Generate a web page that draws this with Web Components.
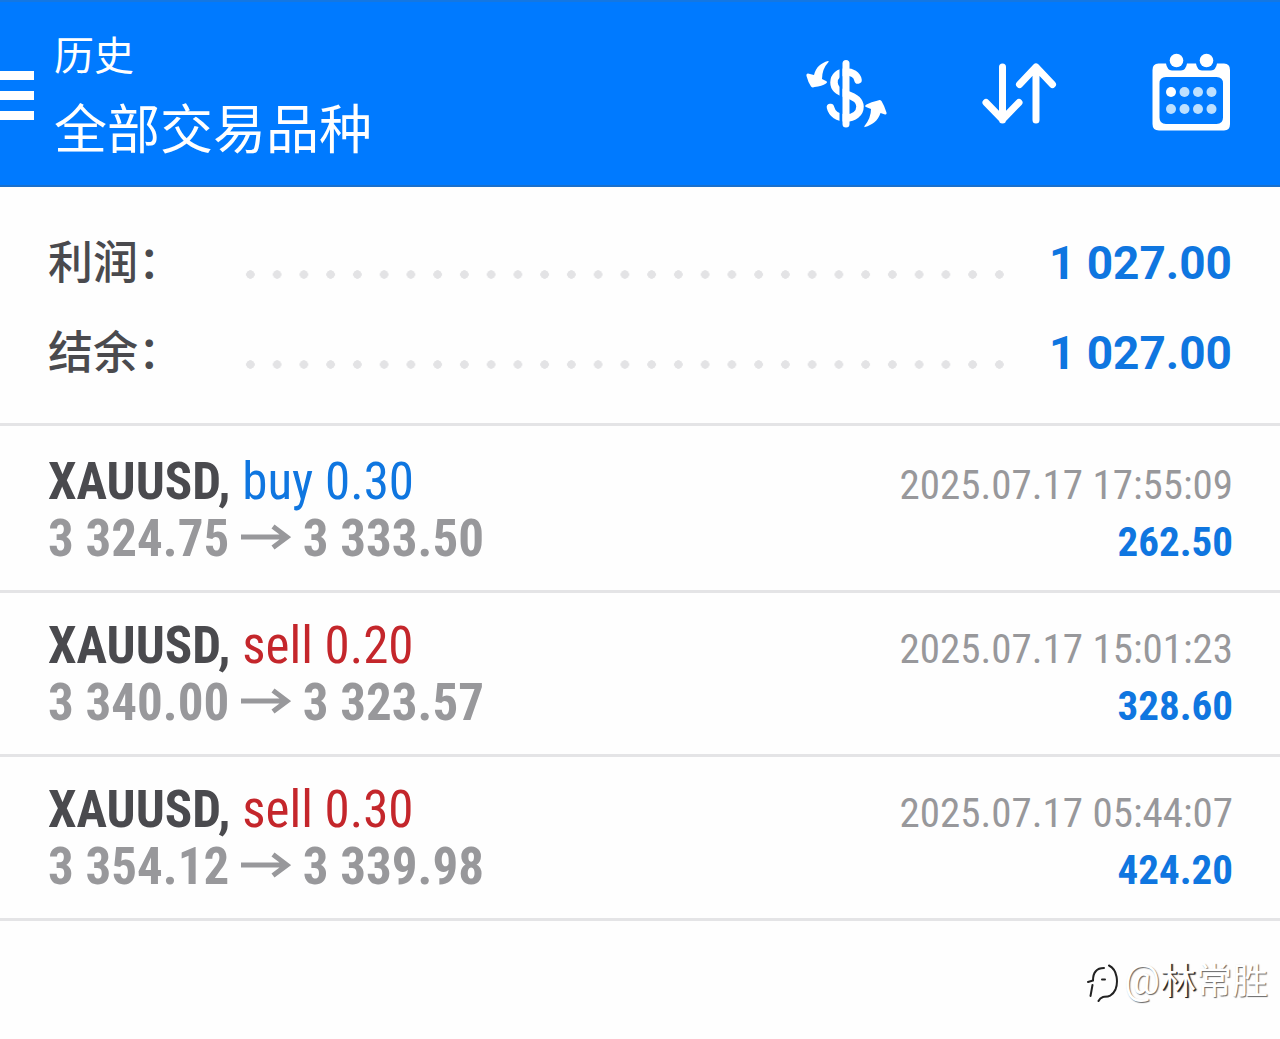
<!DOCTYPE html>
<html lang="zh-CN">
<head>
<meta charset="utf-8">
<meta name="viewport" content="width=device-width, initial-scale=1">
<title>历史</title>
<style>
  :root {
    --bar: #007aff;
    --blue: #0f76e0;
    --red: #c4262b;
    --ink: #4a4a4e;
    --grey: #98989b;
    --line: #e4e4e6;
    --edge: 48px;
    --cjk: "Noto Sans CJK SC", sans-serif;
    --narrow: "Roboto Condensed", Roboto, "Noto Sans CJK SC", sans-serif;
  }
  body { margin: 0; background: #fefefe; color: var(--ink); font-family: Roboto, var(--cjk); }
</style>
</head>
<body>
<history-page></history-page>

<template id="page-tpl">
  <style>
    :host { display: flex; flex-direction: column; min-height: 100vh; }
    main { flex: 1; }
    .summary { padding: 31px var(--edge) 25px; border-bottom: 3px solid var(--line); }
    .deals { padding-top: 3px; }
    footer { display: flex; justify-content: flex-end; padding: 0 12px 31px; }
  </style>
  <app-bar>
    <span slot="title">历史</span>
    <span slot="subtitle">全部交易品种</span>
  </app-bar>
  <main>
    <section class="summary">
      <summary-line><span slot="label">利润：</span><span slot="value">1 027.00</span></summary-line>
      <summary-line><span slot="label">结余：</span><span slot="value">1 027.00</span></summary-line>
    </section>
    <section class="deals" role="list">
      <deal-row role="listitem" side="buy" volume="0.30" open="3 324.75" close="3 333.50" time="2025.07.17 17:55:09" profit="262.50"></deal-row>
      <deal-row role="listitem" side="sell" volume="0.20" open="3 340.00" close="3 323.57" time="2025.07.17 15:01:23" profit="328.60"></deal-row>
      <deal-row role="listitem" side="sell" volume="0.30" open="3 354.12" close="3 339.98" time="2025.07.17 05:44:07" profit="424.20"></deal-row>
    </section>
  </main>
  <footer><author-mark></author-mark></footer>
</template>

<template id="bar-tpl">
  <style>
    :host { display: block; }
    header {
      display: flex; align-items: center; box-sizing: border-box; height: 187px;
      padding-right: 40px; background: var(--bar); color: #fff;
      border-top: 2px solid #1477e2; border-bottom: 2px solid #1a70cc;
    }
    button { display: flex; align-items: center; justify-content: center; padding: 0; border: 0; background: none; color: inherit; }
    svg { display: block; fill: currentColor; }
    .titles { flex: 1; padding-left: 20px; font-family: var(--cjk); }
    h1, p { margin: 0; font-weight: 400; }
    h1 { font-size: 40px; line-height: 48px; }
    p { font-size: 53px; line-height: 64px; margin-top: 17px; }
    nav { display: flex; gap: 72px; }
    nav button { width: 100px; height: 100px; }
  </style>
  <header>
    <button aria-label="菜单">
      <svg width="34" height="54" viewBox="0 0 34 54"><path d="M0 4h34v9H0zM0 24h34v9H0zM0 44h34v9H0z"/></svg>
    </button>
    <div class="titles"><h1><slot name="title"></slot></h1><p><slot name="subtitle"></slot></p></div>
    <nav>
      <button aria-label="货币">
        <svg width="100" height="100" viewBox="0 0 100 100">
          <path fill="none" stroke="currentColor" stroke-width="7.500" stroke-linecap="round" d="M62 36C61 30.500 56 28 50 28C43 28 38 32 38 38.500C38 45 43 48 50 50C58 52.500 64 56 64 62.500C64 69.500 58 74 50 74C42 74 36 70 34.500 63.500"/>
          <path fill="#007aff" d="M43.500 20h3v64h-3z"/>
          <path fill="none" stroke="currentColor" stroke-width="7" stroke-linecap="round" d="M50 19.500v60.500"/>
          <path d="M32 17C25 19 20 23 18 31L12 29.500Q10 29.500 10.500 32Q12 38 15 42.500Q16.500 44 18.500 43Q26 42 30 39.500Q32 38 30 37L26 35Q26 25 32.500 18Q33 16.500 32 17Z"/>
          <path d="M69 83C76 81 82 77 84.500 69L89 70.500Q91 71 90.500 68.500Q88 61 85.500 57Q84 55.500 82 56.500Q75 58 70.500 60.500Q68 62 70 63L75 65Q75 74 68.500 82Q68 83.500 69 83Z"/>
        </svg>
      </button>
      <button aria-label="排序">
        <svg width="100" height="100" viewBox="0 0 100 100">
          <path fill="none" stroke="currentColor" stroke-width="7" stroke-linecap="round" stroke-linejoin="round" d="M34.500 23v53M18 58.500L34.500 75.500L51 58.500M68 76v-53M51.500 40.500L68 23L84.500 40.500"/>
        </svg>
      </button>
      <button aria-label="日期">
        <svg width="100" height="100" viewBox="0 0 100 100">
          <path fill-rule="evenodd" d="M18.500 19.500h7.500Q27 26 32 26.500H41Q46 26 47 19.500H56Q57 26 62 26.500H71Q76 26 77 19.500H84Q90 19.500 90 26V80Q90 86.500 84 86.500H19Q12.500 86.500 12.500 80V26Q12.500 19.500 18.500 19.500ZM26 33Q19.500 33 19.500 39.500V73.500Q19.500 80 26 80H76.500Q83 80 83 73.500V39.500Q83 33 76.500 33Z"/>
          <circle cx="36.500" cy="16.500" r="6.800"/><circle cx="66.500" cy="16.500" r="6.800"/>
          <circle cx="31" cy="48" r="5"/>
          <g fill="#bde0ff"><circle cx="44.500" cy="48" r="5"/><circle cx="58" cy="48" r="5"/><circle cx="71.500" cy="48" r="5"/>
          <circle cx="31" cy="65" r="5"/><circle cx="44.500" cy="65" r="5"/><circle cx="58" cy="65" r="5"/><circle cx="71.500" cy="65" r="5"/></g>
        </svg>
      </button>
    </nav>
  </header>
</template>

<template id="summary-tpl">
  <style>
    :host { display: flex; align-items: baseline; box-sizing: border-box; height: 90px; padding-top: 12px; }
    .label { width: 189px; font: 500 45px/60px var(--cjk); color: var(--ink); }
    .dots { flex: 1; height: 9px; margin: 0 36px 5px 0;
      background: radial-gradient(circle closest-side, #e3e3e5 88%, transparent) 0 0 / 27px 9px round; }
    .value { font: 700 46px/60px Roboto, sans-serif; color: var(--blue); }
  </style>
  <span class="label"><slot name="label"></slot></span>
  <span class="dots" aria-hidden="true"></span>
  <span class="value"><slot name="value"></slot></span>
</template>

<template id="deal-tpl">
  <style>
    :host { display: block; padding: 24px 47px 23px var(--edge);
      border-bottom: 3px solid var(--line); font-family: var(--narrow); }
    div { display: flex; justify-content: space-between; align-items: baseline; height: 57px;
      font-size: 51px; line-height: 57px; white-space: pre; }
    b { font-weight: 700; }
    .buy, .profit { color: var(--blue); }
    .sell { color: var(--red); }
    .prices, time { color: var(--grey); }
    time, .profit { font-size: 41px; }
    .arrow { vertical-align: 6px; }
  </style>
  <div>
    <span><b>XAUUSD,</b> <span class="order"></span></span>
    <time></time>
  </div>
  <div>
    <b class="prices"><span class="open"></span> <svg class="arrow" role="img" aria-label="→" width="50" height="26" viewBox="0 0 50 26" fill="none" stroke="currentColor" stroke-width="5"><path d="M0 13H46M32 2.500L46 13L32 23.500"/></svg> <span class="close"></span></b>
    <b class="profit"></b>
  </div>
</template>

<template id="mark-tpl">
  <style>
    :host { display: flex; align-items: center; gap: 5px; font: 400 36px/52px Roboto, var(--cjk); color: #fff; }
    svg { display: block; }
    span { text-shadow: 1px 1px 1px #666; }
    .at { font-size: 40px; line-height: 1px; }
    .dark { text-shadow: 1px 1px 0 #222, 2px 1px 1px #444; }
  </style>
  <svg width="32" height="44" viewBox="0 0 32 44" fill="none" stroke-linecap="round" aria-hidden="true">
    <path stroke="#222" stroke-width="2" d="M1 22L6 20.500Q6 8 17 8M5.500 25L3.500 36M22 5.500C31 10 31 23 28.500 29.500C25 37 20 36.500 16 37Q13 38 11.500 41M15 19.500H18"/>
  </svg>
  <span><span class="at">@</span><span class="dark">林</span>常胜</span>
</template>

<script>
  class TemplateElement extends HTMLElement {
    constructor() {
      super();
      const template = document.getElementById(this.constructor.template);
      this.attachShadow({ mode: 'open' }).append(template.content.cloneNode(true));
    }
  }

  class AppBar extends TemplateElement { static template = 'bar-tpl'; }
  class SummaryLine extends TemplateElement { static template = 'summary-tpl'; }
  class AuthorMark extends TemplateElement { static template = 'mark-tpl'; }
  class HistoryPage extends TemplateElement { static template = 'page-tpl'; }

  class DealRow extends TemplateElement {
    static template = 'deal-tpl';
    connectedCallback() {
      const set = (selector, text) => { this.shadowRoot.querySelector(selector).textContent = text; };
      const side = this.getAttribute('side');
      set('.order', side + ' ' + this.getAttribute('volume'));
      this.shadowRoot.querySelector('.order').classList.add(side);
      set('.open', this.getAttribute('open'));
      set('.close', this.getAttribute('close'));
      set('time', this.getAttribute('time'));
      set('.profit', this.getAttribute('profit'));
    }
  }

  customElements.define('app-bar', AppBar);
  customElements.define('summary-line', SummaryLine);
  customElements.define('deal-row', DealRow);
  customElements.define('author-mark', AuthorMark);
  customElements.define('history-page', HistoryPage);
</script>
</body>
</html>
